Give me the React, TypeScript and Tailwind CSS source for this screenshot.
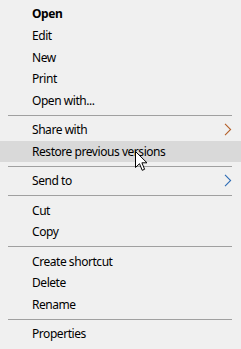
import React from "react";

type Item = { label: string; bold?: boolean; sub?: "orange" | "blue"; hover?: boolean } | "sep";

const items: Item[] = [
  { label: "Open", bold: true },
  { label: "Edit" },
  { label: "New" },
  { label: "Print" },
  { label: "Open with..." },
  "sep",
  { label: "Share with", sub: "orange" },
  { label: "Restore previous versions", hover: true },
  "sep",
  { label: "Send to", sub: "blue" },
  "sep",
  { label: "Cut" },
  { label: "Copy" },
  "sep",
  { label: "Create shortcut" },
  { label: "Delete" },
  { label: "Rename" },
  "sep",
  { label: "Properties" },
];

function Chevron({ color }: { color: string }) {
  return (
    <svg width="8" height="13" viewBox="0 0 8 13" className="mr-[9px]">
      <path d="M1 0.8 L6.6 6.5 L1 12.2" fill="none" stroke={color} strokeWidth="1.1" />
    </svg>
  );
}

function Cursor() {
  return (
    <svg
      width="13"
      height="21"
      viewBox="0 0 13 21"
      className="absolute left-[135px] top-[151px]"
    >
      <path
        d="M0.5 0.5 L0.5 16.5 L4.5 12.7 L7.2 19.3 L9.6 18.3 L6.9 11.8 L12 11.8 Z"
        fill="#ffffff"
        stroke="#000000"
        strokeWidth="1"
        strokeLinejoin="miter"
      />
    </svg>
  );
}

export default function App() {
  return (
    <div
      className="relative w-[241px] h-[349px] overflow-hidden bg-[#f0f0f0] pt-[3px] text-[12px] text-black"
      style={{ fontFamily: '"Noto Sans", "Open Sans", sans-serif' }}
    >
      {items.map((it, i) =>
        it === "sep" ? (
          <div key={i} className="h-[7.6px] flex items-center pl-[8px] pr-[9px]">
            <div className="h-px w-full bg-[#a0a0a0]" />
          </div>
        ) : (
          <div
            key={i}
            className={`h-[21.7px] flex items-center justify-between pl-[32px] ${
              it.hover ? "bg-[#d9d9d9]" : ""
            }`}
          >
            <span className={`leading-none pt-[1px] tracking-[-0.45px] ${it.bold ? "font-bold" : ""}`}>
              {it.label}
            </span>
            {it.sub === "orange" && <Chevron color="#b4602a" />}
            {it.sub === "blue" && <Chevron color="#2f6db5" />}
          </div>
        )
      )}
      <Cursor />
    </div>
  );
}
